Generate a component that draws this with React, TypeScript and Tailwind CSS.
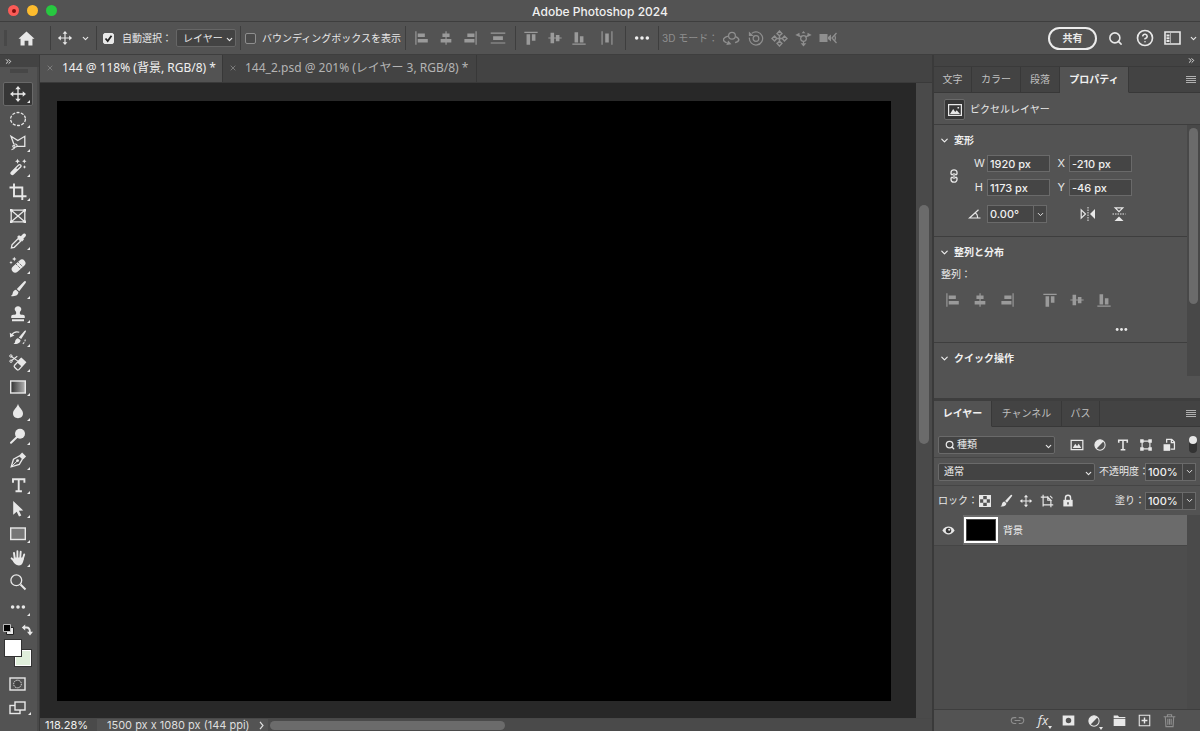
import { useState } from "react";
import type { ReactNode } from "react";
import { ChevronDown, ChevronsRight, CircleHelp, Search } from "lucide-react";

interface IconProps {
  children: ReactNode;
  size?: number;
  className?: string;
}

// 18x18 drawing grid shared by every icon of the app
function Icon({ children, size = 18, className = "" }: IconProps) {
  return (
    <svg
      width={size}
      height={size}
      viewBox="0 0 18 18"
      fill="none"
      stroke="currentColor"
      strokeWidth="1.3"
      className={`shrink-0 ${className}`}
      aria-hidden="true"
    >
      {children}
    </svg>
  );
}

const fill = { fill: "currentColor", stroke: "none" };

const moveShape = (
  <>
    <path d="M9 3v12M3 9h12" />
    <path {...fill} d="M9 1l2.7 3.3H6.3zM9 17l2.7-3.3H6.3zM1 9l3.3-2.7v5.4zM17 9l-3.3-2.7v5.4z" />
  </>
);

const brushShape = (
  <>
    <path {...fill} d="M16.6 1.2c.6.5.4 1.2 0 1.8l-6.4 8.2-2.4-2.1 7-7.4c.6-.6 1.2-.9 1.8-.5z" />
    <path {...fill} d="M7 9.8l2.4 2.2c.2 2.6-2.6 4.9-7.6 4 1.6-.7 1.6-1.7 2-3.2.5-1.7 1.7-2.9 3.2-3z" />
  </>
);

const adjustShape = (
  <>
    <circle cx="9" cy="9" r="6.6" />
    <path {...fill} d="M13.7 4.3A6.6 6.6 0 1 0 4.3 13.7z" />
  </>
);

const alignShapes = {
  left: <path {...fill} d="M1.5 1.500h1.300v15H1.500zM4.200 4h8v4h-8zM4.200 10H15.500v4.200H4.200z" />,
  center: <path {...fill} d="M8.400 1.500h1.300v2.300h3.300V8H9.700v2H15v4.200H9.700v2.300H8.400v-2.300H3V10h5.400V8H5V3.800h3.400z" />,
  right: <path {...fill} d="M15.200 1.500h1.300v15h-1.300zM6 4h8v4H6zM2.700 10H14v4.200H2.700z" />,
  rows: <path {...fill} d="M.8 2.800h16.400v1.300H.8zM3.500 7h11v4.200h-11zM.8 14h16.400v1.300H.8z" />,
  top: <path {...fill} d="M1.500 2h15v1.300h-15zM4 4.800h4v11.700H4zM10 4.800h4v7.400h-4z" />,
  middle: <path {...fill} d="M4 3h4v5.400h2V5.500h4v2.900h2.500v1.300H14v2.900h-4V9.700H8V15H4V9.700H1.500V8.400H4z" />,
  bottom: <path {...fill} d="M1.500 15.200h15v1.300h-15zM4 2.500h4V14H4zM10 7h4v7h-4z" />,
  columns: <path {...fill} d="M2.800 1.500h1.300v15H2.800zM7 4h4v10H7zM13.900 1.500h1.300v15h-1.300z" />,
};

const dotsShape = (
  <>
    <circle {...fill} cx="3" cy="9" r="2" />
    <circle {...fill} cx="9" cy="9" r="2" />
    <circle {...fill} cx="15" cy="9" r="2" />
  </>
);

interface Tool {
  label: string;
  icon: ReactNode;
  single?: boolean;
}

const tools: Tool[] = [
  { label: "移動ツール", icon: moveShape },
  {
    label: "楕円形選択ツール",
    icon: <ellipse cx="9" cy="9" rx="7.4" ry="6.5" strokeDasharray="3 1.4" />,
  },
  {
    label: "多角形選択ツール",
    icon: (
      <>
        <path d="M7.500 12.300H15.800V2.300L8.800 6.500 2 2.300l2.900 8" />
        <path d="M5.200 10.200c2.200-.6 3.600 1 2.600 2.300s-4.800 1-3.900-.7c.6-1 2.600-.5 2.100 1.200-.4 1.300-1.700 2.400-3.500 2.800" strokeWidth="1.100" />
      </>
    ),
  },
  {
    label: "自動選択ツール",
    icon: (
      <>
        <path d="M3.400 15.200l7.200-7.200" strokeWidth="4" strokeLinecap="round" />
        <path d="M8.200 10.300L10.600 8" stroke="#535353" strokeWidth="1.400" strokeLinecap="round" />
        <path {...fill} d="M8.500.8l.8 1.700 1.700.8-1.700.8-.8 1.700-.8-1.700L6 3.300l1.700-.8zM15.300 1l.7 1.500 1.500.7-1.500.7-.7 1.500-.7-1.500-1.500-.7 1.500-.7zM15.500 7.200l.6 1.200 1.200.6-1.200.6-.6 1.200-.6-1.200-1.200-.6 1.200-.6z" />
      </>
    ),
  },
  { label: "切り抜きツール", icon: <path d="M5 .5V13.200H17.500M.5 4.500H13.300V17" strokeWidth="1.900" /> },
  {
    label: "フレームツール",
    single: true,
    icon: (
      <>
        <path d="M2.200 3.200h13.600v11.600H2.200zM2.200 3.200l13.600 11.600M15.800 3.200L2.200 14.800" />
        <path {...fill} d="M1 2h2.400v2.400H1zM14.600 2H17v2.400h-2.400zM1 13.600h2.400V16H1zM14.600 13.600H17V16h-2.400z" />
      </>
    ),
  },
  {
    label: "スポイトツール",
    icon: (
      <>
        <path d="M9.300 6.500l2.500 2.500-6.500 6.300-2.900.6.600-3z" />
        <path {...fill} d="M12 4.200c1.200-1.600 2.500-3.500 4.200-2.500 1.700 1.200.4 3.200-1.700 4.500l.4 1.200-1.800 2L8 5l1.900-1.700z" />
      </>
    ),
  },
  {
    label: "スポット修復ブラシツール",
    icon: (
      <>
        <rect {...fill} x="1.500" y="6.600" width="16" height="7" rx="3.500" transform="rotate(-42 9.500 10)" />
        <path d="M7.200 8.200l4.600 4.600M9.300 6.300l4.300 4.300" stroke="#535353" strokeWidth="1" strokeDasharray="1.200 1" />
        <path {...fill} d="M5.300.8l.7 1.500 1.500.7-1.500.7-.7 1.500-.7-1.500L3.100 3l1.500-.7zM2 4.800l.5 1.200 1.200.5-1.200.5L2 8.200 1.500 7 .3 6.500 1.500 6z" />
      </>
    ),
  },
  { label: "ブラシツール", icon: brushShape },
  {
    label: "コピースタンプツール",
    icon: (
      <path {...fill} d="M9 1.200c2 0 3.300 1.400 3.300 3 0 1.500-1.500 2-1.500 3.700 0 1.600.8 1.800 3 1.900 1.300.1 2 .8 2 2V13H2.200v-1.200c0-1.200.7-1.900 2-2 2.200-.1 3-.3 3-1.900 0-1.700-1.500-2.200-1.500-3.700 0-1.600 1.300-3 3.300-3zM3 14.300h12v2H3z" />
    ),
  },
  {
    label: "ヒストリーブラシツール",
    icon: (
      <>
        <path {...fill} d="M16.700 1.600c.5.4.3 1 0 1.500l-4.500 7-2.400-1.700 5.600-6.500c.4-.5.9-.7 1.300-.3zM9 9.300l2.500 1.800c.2 2.500-2.400 4.500-7 3.900 1.500-.7 1.400-1.600 1.700-2.900.4-1.500 1.400-2.700 2.800-2.800z" />
        <path d="M2.500 6.200C4.500 3 8 2.500 10.300 3.300" strokeWidth="1.200" />
        <path {...fill} d="M.8 3.800l.4 4.600 4.200-1.800z" />
        <path d="M13.800 14.800c1.800-1.100 2.600-3 2.400-5.600" strokeDasharray="2 1.200" strokeWidth="1.100" />
      </>
    ),
  },
  {
    label: "背景消しゴムツール",
    icon: (
      <>
        <path d="M12.200 4.300l4.300 4-6.400 7.100c-.7.7-1.500.7-2.200.1L5.600 13.200c-.6-.6-.6-1.300 0-2z" />
        <path {...fill} d="M12.200 4l4.600 4.300-3.900 4.500-4.800-4.200z" />
        <path d="M2 2.300l7 4.800M2.300 6.800l6-4.600" strokeWidth="1.100" />
        <circle cx="1.900" cy="2" r="1.200" strokeWidth="1" />
        <circle cx="2" cy="7.200" r="1.200" strokeWidth="1" />
      </>
    ),
  },
  {
    label: "グラデーションツール",
    icon: (
      <>
        <defs>
          <linearGradient id="gradient-tool">
            <stop offset="0" stopColor="#303030" />
            <stop offset="1" stopColor="#b4b4b4" />
          </linearGradient>
        </defs>
        <rect x="1.700" y="3" width="14.600" height="12" fill="url(#gradient-tool)" strokeWidth="1.400" />
      </>
    ),
  },
  { label: "ぼかしツール", icon: <path {...fill} d="M9 1.800c.6 3.500 5 6 5 9.700 0 2.900-2.200 4.700-5 4.700s-5-1.800-5-4.700c0-3.700 4.400-6.200 5-9.700z" /> },
  {
    label: "覆い焼きツール",
    icon: (
      <>
        <circle {...fill} cx="11" cy="6.700" r="5" />
        <path d="M8 10L2 15.800" strokeWidth="2" strokeLinecap="round" />
      </>
    ),
  },
  {
    label: "ペンツール",
    icon: (
      <>
        <path d="M2.200 15.800L4.500 8.200l6.200-3.500 3 3-3.400 5.700z" />
        <path {...fill} d="M10.500 4.300l2.600-2.800 4 4-2.800 2.700z" />
        <path d="M2.500 15.500l5.500-5.300" strokeWidth="1" />
        <circle {...fill} cx="8.600" cy="9.600" r="1.400" />
      </>
    ),
  },
  {
    label: "横書き文字ツール",
    icon: <path d="M4 6.800V3.200h11.400v3.600M9.700 3.200v12.300M6.500 15.300h6.400" strokeWidth="1.900" />,
  },
  { label: "パスコンポーネント選択ツール", icon: <path {...fill} d="M4.200 1l10 9.400-4.300.3 2.400 4.800-2.300 1.100-2.300-4.900-3.500 3z" /> },
  { label: "長方形ツール", icon: <rect x="1.700" y="3" width="14.600" height="11.500" fill="#777" strokeWidth="1.400" /> },
  {
    label: "手のひらツール",
    icon: (
      <>
        <path d="M5.800 10L5 4M8.400 9V2.200M11.200 9l.5-6.200M13.600 10.500l1.600-5M5.800 12.500L2.600 9.300" strokeWidth="1.900" strokeLinecap="round" />
        <path {...fill} d="M5 8.500h9.600c.2 2.800-.7 8-4.700 8-3.200 0-4.900-2-6-4.700z" />
      </>
    ),
  },
  {
    label: "ズームツール",
    single: true,
    icon: (
      <>
        <circle cx="7.300" cy="7.300" r="5.400" />
        <path d="M11.500 11.500l5 5" strokeWidth="2" />
      </>
    ),
  },
  { label: "ツールバーを編集", icon: <g transform="translate(9 9) scale(.9) translate(-9 -9)">{dotsShape}</g> },
];

function Separator() {
  return <div className="h-6 w-px shrink-0 bg-[#3e3e3e]" />;
}

function IconButton({ label, className = "w-6", children, size = 16 }: { label: string; className?: string; children: ReactNode; size?: number }) {
  return (
    <button type="button" aria-label={label} className={`flex shrink-0 items-center justify-center ${className}`}>
      <Icon size={size}>{children}</Icon>
    </button>
  );
}

function TitleBar() {
  return (
    <header className="relative flex h-[22px] shrink-0 items-center justify-center border-b border-[#3e3e3e]">
      <div className="absolute left-2 flex gap-2">
        <button type="button" aria-label="閉じる" className="flex size-[11px] items-center justify-center rounded-full bg-[#fc5b57]">
          <span className="size-1 rounded-full bg-[#7c0f0d]" />
        </button>
        <button type="button" aria-label="しまう" className="size-[11px] rounded-full bg-[#fdbc2e]" />
        <button type="button" aria-label="拡大" className="size-[11px] rounded-full bg-[#27c840]" />
      </div>
      <h1 className="pt-[2px] text-[12px] font-medium text-[#f0f0f0]">Adobe Photoshop 2024</h1>
    </header>
  );
}

function CheckBox({ id, defaultChecked }: { id: string; defaultChecked?: boolean }) {
  return (
    <span className="relative flex size-[11px] shrink-0">
      <input
        id={id}
        type="checkbox"
        defaultChecked={defaultChecked}
        className="peer size-[11px] appearance-none rounded-xs border border-[#8e8e8e] bg-[#4a4a4a] checked:border-[#e8e8e8] checked:bg-[#e8e8e8]"
      />
      <svg viewBox="0 0 11 11" className="pointer-events-none absolute inset-0 hidden peer-checked:block" fill="none" stroke="#222" strokeWidth="1.800">
        <path d="M2.500 5.500l2.200 2.500 3.800-5.200" />
      </svg>
    </span>
  );
}

function OptionsBar() {
  const alignLeft = [
    ["左端揃え", alignShapes.left],
    ["水平方向中央揃え", alignShapes.center],
    ["右端揃え", alignShapes.right],
  ] as const;
  const alignTop = [
    ["上端揃え", alignShapes.top],
    ["垂直方向中央揃え", alignShapes.middle],
    ["下端揃え", alignShapes.bottom],
  ] as const;

  return (
    <div className="flex h-[33px] shrink-0 items-center border-b border-[#3e3e3e]">
      <div className="ml-1 h-4 w-[3px] bg-[#484848]" />
      <button type="button" aria-label="ホーム" className="flex w-[43px] items-center justify-center pr-1">
        <Icon size={17}>
          <path {...fill} d="M9 1.500l8.500 7.800h-2.200v7H11v-5H7v5H2.700v-7H.5z" />
        </Icon>
      </button>
      <Separator />
      <IconButton label="移動ツール" className="w-[27px]">{moveShape}</IconButton>
      <ChevronDown size={9} strokeWidth={3} className="ml-[3px] mr-[6px] shrink-0" />
      <Separator />
      <div className="ml-[6px] flex items-center">
        <CheckBox id="auto-select" defaultChecked />
        <label htmlFor="auto-select" className="ml-2 w-[54px] shrink-0 whitespace-nowrap">自動選択：</label>
      </div>
      <div className="relative shrink-0">
        <select aria-label="自動選択の対象" className="h-[18px] w-[60px] appearance-none rounded-xs border border-[#666] bg-[#434343] pl-[6px]">
          <option>レイヤー</option>
          <option>グループ</option>
        </select>
        <ChevronDown size={9} strokeWidth={3} className="pointer-events-none absolute right-[2px] top-[6px]" />
      </div>
      <div className="ml-1"><Separator /></div>
      <div className="ml-1 flex w-[160px] shrink-0 items-center">
        <CheckBox id="bounding-box" />
        <label htmlFor="bounding-box" className="ml-[6px] whitespace-nowrap">バウンディングボックスを表示</label>
      </div>
      <Separator />
      <div className="flex pl-1 text-[#9a9a9a]">
        {alignLeft.map(([label, shape]) => (
          <IconButton key={label} label={label}>{shape}</IconButton>
        ))}
        <IconButton label="垂直方向に分布" className="mr-1 ml-1 w-6">{alignShapes.rows}</IconButton>
      </div>
      <div className="mr-[3px] ml-px"><Separator /></div>
      <div className="flex text-[#9a9a9a]">
        {alignTop.map(([label, shape]) => (
          <IconButton key={label} label={label}>{shape}</IconButton>
        ))}
        <IconButton label="水平方向に分布" className="ml-1 w-6">{alignShapes.columns}</IconButton>
      </div>
      <div className="ml-[6px]"><Separator /></div>
      <IconButton label="整列と分布" className="w-8 text-[#f0f0f0]">{dotsShape}</IconButton>
      <Separator />
      <div className="flex items-center pl-[3px] text-[#8f8f8f]">
        <span className="w-[57px] shrink-0 whitespace-nowrap">3D モード：</span>
        <IconButton label="3D オービット" size={17}>
          <circle cx="9.500" cy="6" r="3.600" />
          <path d="M6 6.500C-1 8-1 12 4 13.600M13.200 7c5 2 4.600 5-.5 6.400" strokeWidth="1.500" />
          <path {...fill} d="M3.500 15.800L9 15l-3.500-4z" />
        </IconButton>
        <IconButton label="3D ロール" size={17}>
          <circle cx="9.500" cy="9" r="3" />
          <path d="M5 3.600A7 7 0 1 1 2.600 8" />
          <path {...fill} d="M2 1.500v4.800h5z" />
        </IconButton>
        <IconButton label="3D パン" size={17}>
          <path d="M9 5.500v7M5.500 9h7" strokeWidth="1.600" />
          <path d="M9 1l2.600 2.800L9 6 6.400 3.800zM9 12l2.600 2.200L9 17l-2.600-2.800zM3.800 6.400L6 9l-2.200 2.600L1 9zM14.200 6.400L17 9l-2.800 2.600L12 9z" strokeWidth="1.500" />
        </IconButton>
        <IconButton label="3D スライド" size={17}>
          <circle cx="9" cy="9" r="3" />
          <path d="M3.500 5.500l3.500 2M14.500 5.500l-3.500 2M9 12v3" />
          <path {...fill} d="M9 17.500l-3-3.500h6zM.3 5.300l4.400-2.500.3 4.700zM17.700 5.300l-4.400-2.500-.3 4.700zM9 1l2 2.500H7z" />
        </IconButton>
        <IconButton label="3D カメラ" size={18} className="w-[25px]">
          <path {...fill} d="M.5 5h8v8h-8zM9 8l3-2.500v7L9 10z" />
          <path d="M17.500 4L13 9l4.500 5" />
          <path d="M15.800 6.500c.8 1.500.8 3.500 0 5" />
        </IconButton>
      </div>
      <div className="ml-auto flex items-center">
        <button type="button" className="h-[23px] w-[49px] rounded-full border-2 border-[#ececec] font-bold leading-none">共有</button>
        <button type="button" aria-label="検索" className="flex w-9 justify-center">
          <Search size={15} strokeWidth={2.500} />
        </button>
        <button type="button" aria-label="ヘルプ" className="flex w-[23px] justify-center">
          <CircleHelp size={18} strokeWidth={2.200} />
        </button>
        <button type="button" aria-label="ワークスペース" className="ml-2 flex items-center gap-2">
          <svg width="17" height="14" viewBox="0 0 17 14" fill="none" stroke="currentColor" strokeWidth="1.600">
            <path d="M1 1h15v12H1z" />
            <path d="M2.500 3.500h3v2h-3zM2.500 6.200h3v2h-3zM2.500 8.900h3v2h-3z" {...fill} />
            <path d="M6.500 2v10" strokeWidth="1" opacity=".6" />
          </svg>
          <ChevronDown size={9} strokeWidth={3} className="mr-[2px]" />
        </button>
      </div>
    </div>
  );
}

function Toolbar() {
  const [active, setActive] = useState(0);

  return (
    <nav className="flex w-10 shrink-0 flex-col border-r border-r-[#3a3a3a] bg-[#494949]" aria-label="ツール">
      <div className="flex h-3 shrink-0 items-center bg-[#434343] pl-1">
        <ChevronsRight size={9} strokeWidth={2.500} />
      </div>
      <div className="flex w-[37px] flex-1 flex-col bg-[#535353]">
        <div className="mx-auto mt-[2px] h-1 w-[18px] shrink-0 bg-[#474747]" />
        <div className="mt-[9px] flex h-[537px] shrink-0 flex-col pl-[3px]">
          {tools.map((tool, i) => (
            <button
              key={tool.label}
              type="button"
              aria-label={tool.label}
              aria-pressed={i === active}
              onClick={() => setActive(i)}
              className={`relative flex w-[30px] flex-1 items-center justify-center rounded-xs border ${
                i === active ? "border-[#696969] bg-[#363636]" : "border-transparent"
              }`}
            >
              <Icon size={18}>{tool.icon}</Icon>
              {!tool.single && (
                <svg width="3" height="3" viewBox="0 0 3 3" className="absolute right-[2px] bottom-[2px]">
                  <path d="M3 0v3H0z" fill="currentColor" />
                </svg>
              )}
            </button>
          ))}
        </div>
        <div className="flex shrink-0 justify-between pt-1 pr-1 pl-[2px]">
          <button type="button" aria-label="描画色と背景色を初期設定に戻す">
            <svg width="13" height="13" viewBox="0 0 13 13">
              <path d="M4.500 4.500h7v7h-7z" fill="#e8e8e8" stroke="#222" />
              <path d="M1.500 1.500h7v7h-7z" fill="#000" stroke="#bbb" />
            </svg>
          </button>
          <button type="button" aria-label="描画色と背景色を入れ替え">
            <svg width="12" height="12" viewBox="0 0 12 12" fill="none" stroke="currentColor" strokeWidth="1.800">
              <path d="M3 3.500h2.500C8 3.500 9 5 9 8.500" />
              <path d="M4.200.5v6L.8 3.500zM6 7.800h6L9 11.500z" fill="currentColor" stroke="none" />
            </svg>
          </button>
        </div>
        <div className="relative mt-[3px] ml-1 h-7 w-7 shrink-0">
          <button type="button" aria-label="背景色" className="absolute right-0 bottom-0 size-[18px] border border-[#333] bg-[#e0efdb] outline-1 -outline-offset-2 outline-white" />
          <button type="button" aria-label="描画色" className="absolute top-0 left-0 size-[18px] border border-[#333] bg-white" />
        </div>
        <button type="button" aria-label="クイックマスクモード" className="mt-[10px] ml-[9px] w-[17px]">
          <svg width="17" height="14" viewBox="0 0 17 14" fill="none" stroke="currentColor">
            <rect x="1" y="1" width="15" height="12" strokeWidth="1.400" />
            <circle cx="8.500" cy="7" r="3.800" strokeDasharray="1.500 .8" fill="#444" />
          </svg>
        </button>
        <button type="button" aria-label="スクリーンモード" className="mt-[10px] ml-[9px] flex w-[22px] items-end justify-between">
          <svg width="17" height="14" viewBox="0 0 17 14" fill="#535353" stroke="currentColor" strokeWidth="1.400">
            <rect x="1" y="4.500" width="10" height="8" />
            <rect x="6" y="1" width="10" height="8" />
          </svg>
          <svg width="3" height="3" viewBox="0 0 3 3">
            <path d="M3 0v3H0z" fill="currentColor" />
          </svg>
        </button>
      </div>
    </nav>
  );
}

const documents = [
  { name: "144 @ 118% (背景, RGB/8) *", width: "w-[183px]" },
  { name: "144_2.psd @ 201% (レイヤー 3, RGB/8) *", width: "w-[254px]" },
];

function DocumentArea() {
  const [open, setOpen] = useState(0);

  return (
    <main className="flex min-w-0 flex-1 flex-col">
      <div role="tablist" className="flex h-7 shrink-0 border-b border-[#3a3a3a] bg-[#434343]">
        {documents.map((doc, i) => (
          <button
            key={doc.name}
            type="button"
            role="tab"
            aria-selected={i === open}
            onClick={() => setOpen(i)}
            className={`flex shrink-0 items-center border-r border-[#383838] pb-[2px] pl-[7px] font-['Noto_Sans','Noto_Sans_CJK_JP',sans-serif] text-[12px] whitespace-nowrap ${doc.width} ${
              i === open ? "bg-[#535353] text-[#f0f0f0]" : "text-[#b4b4b4]"
            }`}
          >
            <svg width="6" height="6" viewBox="0 0 7 7" stroke="#858585" className="mr-[9px] shrink-0">
              <path d="M.8.8l5.400 5.400M6.200.8L.8 6.200" />
            </svg>
            {doc.name}
          </button>
        ))}
      </div>
      <div className="flex flex-1">
        <div className="flex flex-1 bg-[#282828] pt-[18px] pr-[25px] pb-[17px] pl-[17px]">
          <div className="flex-1 bg-black" />
        </div>
        <div className="w-4 shrink-0 bg-[#4a4a4a] px-[3px] pt-[122px]">
          <div className="h-[239px] rounded-full bg-[#6b6b6b]" />
        </div>
      </div>
      <footer className="flex h-[13px] shrink-0 items-center border-t border-[#484848] bg-[#4a4a4a] font-['Inter',sans-serif] text-[11px] leading-none text-[#f0f0f0]">
        <span className="w-[57px] shrink-0 pl-[5px]">118.28%</span>
        <span className="flex h-full w-[171px] shrink-0 items-center justify-between bg-[#535353] pr-1 pl-[10px] whitespace-nowrap text-[#dedede]">
          1500 px x 1080 px (144 ppi)
          <svg width="5" height="9" viewBox="0 0 5 9" fill="none" stroke="currentColor" strokeWidth="1.200">
            <path d="M1 .8l3 3.700-3 3.700" />
          </svg>
        </span>
        <span className="ml-[2px] h-[9px] w-[235px] rounded-full bg-[#6b6b6b]" />
      </footer>
    </main>
  );
}

interface PanelTabsProps {
  tabs: { name: string; width: string }[];
  initial: number;
}

function PanelTabs({ tabs, initial }: PanelTabsProps) {
  const [active, setActive] = useState(initial);

  return (
    <div role="tablist" className="flex h-[26px] shrink-0 items-stretch bg-[#434343]">
      {tabs.map((tab, i) => (
        <button
          key={tab.name}
          type="button"
          role="tab"
          aria-selected={i === active}
          onClick={() => setActive(i)}
          className={`shrink-0 border-r border-b border-r-[#383838] whitespace-nowrap ${tab.width} ${
            i === active ? "border-b-[#535353] bg-[#535353] font-bold text-[#f0f0f0]" : "border-b-[#383838] text-[#c0c0c0]"
          }`}
        >
          {tab.name}
        </button>
      ))}
      <div className="flex flex-1 items-center justify-end border-b border-[#383838] pr-1">
        <button type="button" aria-label="パネルメニュー">
          <svg width="10" height="8" viewBox="0 0 10 8" fill="none" stroke="#b0b0b0" className="block">
            <path d="M0 .5h10M0 2.500h10M0 4.500h10M0 6.500h10" />
          </svg>
        </button>
      </div>
    </div>
  );
}

function SectionTitle({ children }: { children: ReactNode }) {
  return (
    <h2 className="flex h-[14px] items-center gap-1 pl-[5px] font-bold text-[#f0f0f0]">
      <ChevronDown size={11} strokeWidth={2.500} />
      {children}
    </h2>
  );
}

function Field({ label, value, labelClass }: { label: string; value: string; labelClass: string }) {
  return (
    <label className="flex h-[17px] items-center">
      <span className={`pr-1 text-right text-[11px] ${labelClass}`}>{label}</span>
      <input defaultValue={value} className="h-[17px] w-[63px] border border-[#6a6a6a] bg-[#454545] pl-[2px] text-[11px] font-medium text-[#f0f0f0]" />
    </label>
  );
}

function PropertiesPanel() {
  return (
    <section className="flex h-[331px] shrink-0 flex-col" aria-label="プロパティ">
      <PanelTabs
        initial={3}
        tabs={[
          { name: "文字", width: "w-[38px]" },
          { name: "カラー", width: "w-[49px]" },
          { name: "段落", width: "w-[39px]" },
          { name: "プロパティ", width: "w-[69px]" },
        ]}
      />
      <div className="flex h-8 shrink-0 items-center gap-[5px] border-b border-[#3e3e3e] pt-[2px] pl-[10px]">
        <span className="flex size-[21px] items-center justify-center rounded-xs border border-[#6a6a6a] bg-[#363636]">
          <svg width="14" height="12" viewBox="0 0 14 12" fill="none" stroke="currentColor">
            <path d="M.6.6h12.800v10.800H.6z" strokeWidth="1.200" />
            <path d="M2 10l3.200-5 2 3 1.500-1.700L12 10zM9.500 3h1.600v1.600H9.500z" {...fill} />
          </svg>
        </span>
        ピクセルレイヤー
      </div>
      <div className="flex flex-1">
        <div className="flex-1">
          <div className="border-b border-[#3e3e3e] pt-2 pb-[13px]">
            <SectionTitle>変形</SectionTitle>
            <div className="mt-2 flex items-center">
              <button type="button" aria-label="縦横比を固定" className="flex w-10 shrink-0 justify-center">
                <svg width="8" height="14" viewBox="0 0 8 14" fill="none" stroke="currentColor" strokeWidth="1.300">
                  <path d="M1 5.500V3.500a3 2.700 0 0 1 6 0v2M1 5.500h2M7 5.500H5M1 8.500v2a3 2.700 0 0 0 6 0v-2M1 8.500h2M7 8.500H5M4 4v6" />
                </svg>
              </button>
              <div className="flex flex-col gap-[7px]">
                <Field label="W" value="1920 px" labelClass="w-[13px]" />
                <Field label="H" value="1173 px" labelClass="w-[13px]" />
              </div>
              <div className="flex flex-col gap-[7px]">
                <Field label="X" value="-210 px" labelClass="w-[19px]" />
                <Field label="Y" value="-46 px" labelClass="w-[19px]" />
              </div>
            </div>
            <div className="mt-[9px] flex h-[18px] items-center pl-[34px]">
              <label htmlFor="angle" className="w-[19px]">
                <svg width="13" height="10" viewBox="0 0 13 10" fill="none" stroke="currentColor" strokeWidth="1.200" aria-label="角度">
                  <path d="M10.500.8L1.500 9H12.500M7.500 4c1.500 1 2.300 3 2 5" />
                </svg>
              </label>
              <input id="angle" defaultValue="0.00°" className="h-[18px] w-[47px] border border-[#6a6a6a] bg-[#454545] pl-[2px] text-[11px] font-medium text-[#f0f0f0]" />
              <button type="button" aria-label="角度の候補" className="flex h-[18px] w-[13px] items-center justify-center border border-l-0 border-[#6a6a6a] bg-[#454545]">
                <ChevronDown size={9} strokeWidth={2.500} />
              </button>
              <button type="button" aria-label="水平方向に反転" className="ml-8">
                <svg width="18" height="16" viewBox="0 0 18 16" fill="none" stroke="currentColor">
                  <path d="M9 1v14" strokeDasharray="1.500 1" />
                  <path d="M2.200 3.800v8.400L6.500 8z" strokeWidth="1.200" />
                  <path d="M16 3v10l-5-5z" fill="currentColor" stroke="none" />
                </svg>
              </button>
              <button type="button" aria-label="垂直方向に反転" className="ml-[14px]">
                <svg width="16" height="16" viewBox="0 0 16 16" fill="none" stroke="currentColor">
                  <path d="M1.500 8h13" strokeDasharray="1.500 1" />
                  <path d="M4.200 1.800h7.600L8 5.600z" strokeWidth="1.200" />
                  <path d="M3.500 15h9L8 10.500z" fill="currentColor" stroke="none" />
                </svg>
              </button>
            </div>
          </div>
          <div className="border-b border-[#3e3e3e] pt-2 pb-[5px]">
            <SectionTitle>整列と分布</SectionTitle>
            <p className="mt-[7px] pl-[7px] leading-4">整列：</p>
            <div className="mt-[10px] flex gap-[9px] pl-[10px] text-[#9a9a9a]">
              <IconButton label="左端揃え" className="w-[18px]">{alignShapes.left}</IconButton>
              <IconButton label="水平方向中央揃え" className="w-[18px]">{alignShapes.center}</IconButton>
              <IconButton label="右端揃え" className="w-[18px]">{alignShapes.right}</IconButton>
              <IconButton label="上端揃え" className="ml-4 w-[18px]">{alignShapes.top}</IconButton>
              <IconButton label="垂直方向中央揃え" className="w-[18px]">{alignShapes.middle}</IconButton>
              <IconButton label="下端揃え" className="w-[18px]">{alignShapes.bottom}</IconButton>
            </div>
            <div className="mt-[13px] flex h-4 justify-end pr-[58px]">
              <IconButton label="その他のオプション" className="w-4" size={13}>{dotsShape}</IconButton>
            </div>
          </div>
          <div className="pt-2">
            <SectionTitle>クイック操作</SectionTitle>
          </div>
        </div>
        <div className="h-[251px] w-[13px] shrink-0 bg-[#484848] px-[2px] pt-[3px]">
          <div className="h-[176px] rounded-full bg-[#6b6b6b]" />
        </div>
      </div>
    </section>
  );
}

function PercentField({ id, label, value }: { id: string; label: string; value: string }) {
  return (
    <div className="ml-auto flex items-center">
      <label htmlFor={id} className="w-[46px] text-right whitespace-nowrap">{label}</label>
      <input id={id} defaultValue={value} className="h-[18px] w-[38px] border border-[#6a6a6a] bg-[#434343] pl-[2px] text-[11px] font-medium text-[#f0f0f0]" />
      <button type="button" aria-label={`${label}を変更`} className="mr-1 flex h-[18px] w-[13px] items-center justify-center border border-l-0 border-[#6a6a6a] bg-[#434343]">
        <ChevronDown size={9} strokeWidth={2.500} />
      </button>
    </div>
  );
}

function LayersPanel() {
  return (
    <section className="flex flex-1 flex-col border-t-[3px] border-[#3e3e3e]" aria-label="レイヤー">
      <PanelTabs
        initial={0}
        tabs={[
          { name: "レイヤー", width: "w-[58px]" },
          { name: "チャンネル", width: "w-[70px]" },
          { name: "パス", width: "w-[38px]" },
        ]}
      />
      <div className="flex h-[31px] shrink-0 items-center border-b border-[#454545] pt-[5px] pl-1">
        <div className="relative w-[117px] shrink-0">
          <select aria-label="フィルターの種類" className="block h-[18px] w-full appearance-none rounded-xs border border-[#6a6a6a] bg-[#434343] pl-[18px]">
            <option>種類</option>
            <option>名前</option>
          </select>
          <Search size={10} strokeWidth={3} className="pointer-events-none absolute top-1 left-[7px]" />
          <ChevronDown size={9} strokeWidth={3} className="pointer-events-none absolute top-[6px] right-[2px]" />
        </div>
        <div className="ml-[10px] flex">
          <IconButton label="ピクセルレイヤーフィルター" className="w-[23px]" size={14}>
            <path d="M1.500 3h15v12h-15z" strokeWidth="1.600" />
            <path {...fill} d="M3.500 13l3.300-5.500 2.300 3 2-3 3.400 5.500z" />
          </IconButton>
          <IconButton label="調整レイヤーフィルター" className="w-[23px]" size={14}>{adjustShape}</IconButton>
          <IconButton label="テキストレイヤーフィルター" className="w-[23px]" size={14}>
            <path d="M3.500 6V3h11v3M9 3v12M6 15h6" strokeWidth="2" />
          </IconButton>
          <IconButton label="シェイプレイヤーフィルター" className="w-[23px]" size={14}>
            <path d="M4 4h10v10H4z" strokeWidth="1.500" />
            <path {...fill} d="M1.500 1.500h4.500V6H1.500zM12 1.500h4.500V6H12zM1.500 12h4.500v4.500H1.500zM12 12h4.500v4.500H12z" />
          </IconButton>
          <IconButton label="スマートオブジェクトフィルター" className="w-[23px]" size={14}>
            <path d="M6 6V1.800h6.500l3.500 3.500v9h-5M12 2v4h4" strokeWidth="1.600" />
            <path {...fill} d="M2 8h8.500v8.500H2z" />
          </IconButton>
        </div>
        <button
          type="button"
          role="switch"
          aria-checked="true"
          aria-label="フィルターのオン／オフ"
          className="mr-[3px] ml-auto flex h-[17px] w-2 items-start rounded-full bg-[#333]"
        >
          <span className="size-2 rounded-full bg-[#e8e8e8]" />
        </button>
      </div>
      <div className="flex h-7 shrink-0 items-center border-b border-[#454545] pl-1">
        <div className="relative w-[157px] shrink-0">
          <select aria-label="描画モード" className="block h-[18px] w-full appearance-none rounded-xs border border-[#6a6a6a] bg-[#434343] pl-[5px]">
            <option>通常</option>
            <option>乗算</option>
            <option>スクリーン</option>
          </select>
          <ChevronDown size={9} strokeWidth={3} className="pointer-events-none absolute top-[6px] right-[2px]" />
        </div>
        <PercentField id="opacity" label="不透明度：" value="100%" />
      </div>
      <div className="flex h-[29px] shrink-0 items-center pl-1">
        <span className="w-[36px] shrink-0 whitespace-nowrap">ロック：</span>
        <div className="flex">
          <IconButton label="透明ピクセルをロック" className="w-[21px]" size={14}>
            <path d="M2 2h14v14H2z" strokeWidth="1.400" />
            <path {...fill} d="M2 2h4.700v4.700H2zM11.300 2H16v4.700h-4.700zM6.700 6.700h4.600v4.600H6.700zM2 11.300h4.700V16H2zM11.300 11.300H16V16h-4.700z" />
          </IconButton>
          <IconButton label="画像ピクセルをロック" className="w-[21px]" size={14}>{brushShape}</IconButton>
          <IconButton label="位置をロック" className="w-5" size={14}>{moveShape}</IconButton>
          <IconButton label="アートボードの自動ネストを防止" className="w-[21px]" size={14}>
            <path d="M4 1v15M1 4h10M4 14h13M14 17V8M10 4l4 4h-4z" strokeWidth="1.500" />
            <path d="M13 2.500l3 3" />
          </IconButton>
          <IconButton label="すべてをロック" className="w-[21px]" size={14}>
            <path {...fill} d="M3 7.500h12V16H3z" />
            <path d="M5.700 8V5a3.300 3.300 0 0 1 6.600 0v3" strokeWidth="1.800" />
            <path d="M9 10.500v3" stroke="#535353" strokeWidth="2" />
          </IconButton>
        </div>
        <PercentField id="fill" label="塗り：" value="100%" />
      </div>
      <div className="flex flex-1 bg-[#4a4a4a]">
        <ul className="flex-1 bg-[#4d4d4d]">
          <li className="flex h-[31px] border-b border-[#454545] bg-[#535353]">
            <button type="button" aria-label="レイヤーの表示／非表示" className="flex w-[29px] items-center justify-center">
              <Icon size={13}>
                <path {...fill} d="M.5 9C3 5 6 3.600 9 3.600S15 5 17.500 9C15 13 12 14.400 9 14.400S3 13 .5 9z" />
                <circle cx="9" cy="9" r="3.800" fill="#3a3a3a" stroke="none" />
                <circle {...fill} cx="10" cy="8" r="1.500" />
              </Icon>
            </button>
            <button type="button" className="flex flex-1 items-center gap-[5px] bg-[#6b6b6b] pl-px text-[#f0f0f0]">
              <span className="h-[26px] w-[34px] border-2 border-white bg-black outline-1 -outline-offset-3 outline-[#444]" />
              背景
            </button>
          </li>
        </ul>
        <div className="w-[13px] shrink-0" />
      </div>
      <div className="flex h-[22px] shrink-0 items-center justify-end border-t border-[#3e3e3e] pr-[18px]">
        <IconButton label="レイヤーをリンク" className="w-[25px] text-[#8f8f8f]" size={15}>
          <path d="M7.500 5.500H5a3.500 3.500 0 0 0 0 7h2.500M10.500 5.500H13a3.500 3.500 0 0 1 0 7h-2.500M5.500 9h7" />
        </IconButton>
        <button type="button" aria-label="レイヤースタイルを追加" className="relative w-[26px] font-['Open_Sans',sans-serif] text-[13px] leading-none italic">
          fx
          <svg width="4" height="3" viewBox="0 0 4 3" className="absolute right-1 bottom-[-2px]"><path d="M0 0h4L2 3z" fill="currentColor" /></svg>
        </button>
        <IconButton label="レイヤーマスクを追加" className="w-[25px]" size={15}>
          <path {...fill} d="M2 3h14v12H2zM9 5.700a3.300 3.300 0 1 0 0 6.600 3.300 3.300 0 0 0 0-6.600z" fillRule="evenodd" />
        </IconButton>
        <button type="button" aria-label="調整レイヤーを作成" className="relative flex w-[26px] justify-center">
          <Icon size={14}>{adjustShape}</Icon>
          <svg width="4" height="3" viewBox="0 0 4 3" className="absolute right-1 bottom-[-2px]"><path d="M0 0h4L2 3z" fill="currentColor" /></svg>
        </button>
        <IconButton label="グループを作成" className="w-[25px]" size={15}>
          <path {...fill} d="M2 3h5l1.500 1.800H16V6H2zM2 7h14v8.500H2z" />
        </IconButton>
        <IconButton label="新規レイヤーを作成" className="w-[25px]" size={15}>
          <path d="M2.700 2.700h12.600v12.600H2.700z" />
          <path d="M9 5.500v7M5.500 9h7" strokeWidth="1.700" />
        </IconButton>
        <IconButton label="レイヤーを削除" className="w-[25px] text-[#8f8f8f]" size={15}>
          <path d="M2 4.500h14M6.500 4V2h5v2M4 5l.7 11.300h8.600L14 5M7 7v7M9 7v7M11 7v7" />
        </IconButton>
      </div>
    </section>
  );
}

export default function App() {
  return (
    <div className="flex h-screen flex-col overflow-hidden bg-[#535353] font-['Inter','Noto_Sans_CJK_JP',sans-serif] text-[10px] text-[#e8e8e8]">
      <TitleBar />
      <OptionsBar />
      <div className="flex min-h-0 flex-1">
        <Toolbar />
        <DocumentArea />
        <aside className="flex w-[268px] shrink-0 flex-col border-l-2 border-[#3a3a3a]">
          <div className="flex h-3 shrink-0 items-center justify-end border-b border-[#3a3a3a] bg-[#434343] pr-1">
            <ChevronsRight size={9} strokeWidth={2.500} />
          </div>
          <PropertiesPanel />
          <LayersPanel />
        </aside>
      </div>
    </div>
  );
}
